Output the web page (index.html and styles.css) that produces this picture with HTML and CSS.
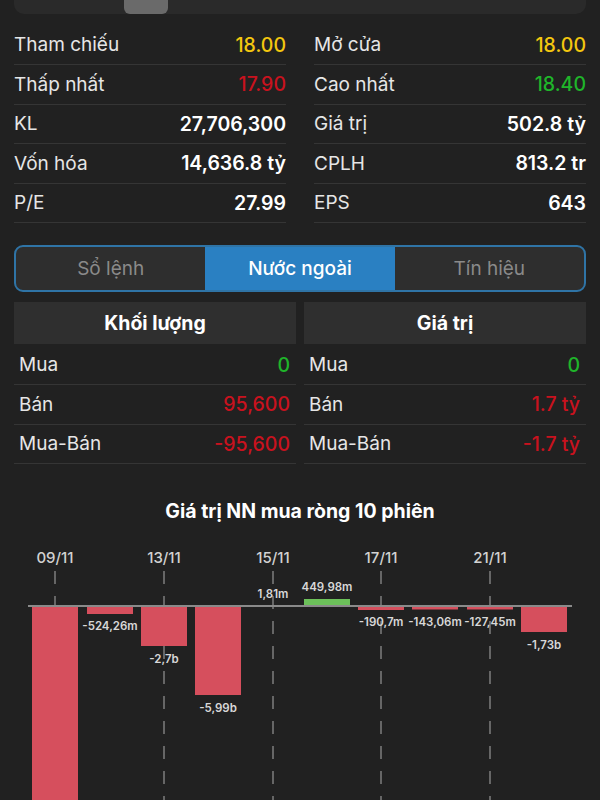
FILE: index.html
```html
<!DOCTYPE html>
<html lang="vi">
  <head>
    <meta charset="UTF-8" />
    <meta name="viewport" content="width=device-width, initial-scale=1.0" />
    <title>Nước ngoài</title>
    <link rel="stylesheet" href="styles.css">
  </head>
  <body>
    <div class="top-strip"><span class="thumb"></span></div>

    <section class="stats">
      <div class="stat"><span>Tham chiếu</span><b class="ref">18.00</b></div>
      <div class="stat"><span>Mở cửa</span><b class="ref">18.00</b></div>
      <div class="stat"><span>Thấp nhất</span><b class="down">17.90</b></div>
      <div class="stat"><span>Cao nhất</span><b class="up">18.40</b></div>
      <div class="stat"><span>KL</span><b>27,706,300</b></div>
      <div class="stat"><span>Giá trị</span><b>502.8 tỷ</b></div>
      <div class="stat"><span>Vốn hóa</span><b>14,636.8 tỷ</b></div>
      <div class="stat"><span>CPLH</span><b>813.2 tr</b></div>
      <div class="stat"><span>P/E</span><b>27.99</b></div>
      <div class="stat"><span>EPS</span><b>643</b></div>
    </section>

    <nav class="tabs">
      <div class="tab">Sổ lệnh</div>
      <div class="tab active">Nước ngoài</div>
      <div class="tab">Tín hiệu</div>
    </nav>

    <section class="foreign">
      <div class="col">
        <div class="head">Khối lượng</div>
        <div class="frow"><span>Mua</span><b class="up">0</b></div>
        <div class="frow"><span>Bán</span><b class="down">95,600</b></div>
        <div class="frow"><span>Mua-Bán</span><b class="down">-95,600</b></div>
      </div>
      <div class="col">
        <div class="head">Giá trị</div>
        <div class="frow"><span>Mua</span><b class="up">0</b></div>
        <div class="frow"><span>Bán</span><b class="down">1.7 tỷ</b></div>
        <div class="frow"><span>Mua-Bán</span><b class="down">-1.7 tỷ</b></div>
      </div>
    </section>

    <h2 class="chart-title">Giá trị NN mua ròng 10 phiên</h2>

    <svg class="chart" width="600" height="277" viewBox="0 523 600 277">
      <g class="dates">
        <text x="55" y="563">09/11</text>
        <text x="164" y="563">13/11</text>
        <text x="273" y="563">15/11</text>
        <text x="381" y="563">17/11</text>
        <text x="490" y="563">21/11</text>
      </g>
      <g class="grid">
        <line x1="55" y1="571" x2="55" y2="800" />
        <line x1="164" y1="571" x2="164" y2="800" />
        <line x1="273" y1="571" x2="273" y2="800" />
        <line x1="381" y1="571" x2="381" y2="800" />
        <line x1="490" y1="571" x2="490" y2="800" />
      </g>
      <line class="axis" x1="28" y1="606" x2="572" y2="606" />
      <g class="neg">
        <rect x="32" y="607" width="46" height="200" />
        <rect x="87" y="607" width="46" height="7" />
        <rect x="141" y="607" width="46" height="39" />
        <rect x="195" y="607" width="46" height="88" />
        <rect x="358" y="607" width="46" height="3" />
        <rect x="412" y="607" width="46" height="2.5" />
        <rect x="467" y="607" width="46" height="2.5" />
        <rect x="521" y="607" width="46" height="25" />
      </g>
      <rect class="pos" x="304" y="599" width="46" height="6" />
      <g class="vals">
        <text x="110" y="630">-524,26m</text>
        <text x="164" y="663">-2,7b</text>
        <text x="218" y="712">-5,99b</text>
        <text x="273" y="598">1,81m</text>
        <text x="327" y="591">449,98m</text>
        <text x="381" y="626">-190,7m</text>
        <text x="435" y="626">-143,06m</text>
        <text x="490" y="626">-127,45m</text>
        <text x="544" y="649">-1,73b</text>
      </g>
    </svg>
  </body>
</html>
```

FILE: styles.css
```css
html {
  overflow: hidden;
}

body {
  margin: 0;
  width: 600px;
  background-color: #212121;
  color: #fff;
  font-family: Inter, 'Noto Sans', sans-serif;
}

.top-strip {
  display: flex;
  margin: 0 14px;
  padding-left: 110px;
  height: 14px;
  background: #2a2a2a;
  border-radius: 0 0 10px 10px;
}

.thumb {
  width: 44px;
  height: 14px;
  background: #6a6a6a;
  border-radius: 0 0 6px 6px;
}

.stats {
  display: grid;
  grid-template-columns: 1fr 1fr;
  column-gap: 28px;
  padding: 0 14px;
  margin-top: 11.5px;
}

.stat,
.frow {
  box-sizing: border-box;
  display: flex;
  justify-content: space-between;
  align-items: center;
  height: 39.5px;
  border-bottom: 1px solid #353535;
  font-size: 19px;
  color: #e6e6e6;
}

.stat b,
.frow b {
  font-size: 19.5px;
  font-weight: 600;
  color: #fff;
}

.stat b.ref {
  color: #f4c70f;
  font-weight: 500;
}

b.down {
  color: #c9121e !important;
  font-weight: 500 !important;
}

b.up {
  color: #1fb52a !important;
  font-weight: 500 !important;
}

.tabs {
  display: grid;
  grid-template-columns: repeat(3, 1fr);
  margin: 21.5px 14px 0;
  height: 47px;
  box-sizing: border-box;
  border: 2px solid #2f74a6;
  border-radius: 9px;
  overflow: hidden;
  background: #2e2e2e;
}

.tab {
  display: flex;
  align-items: center;
  justify-content: center;
  font-size: 19px;
  color: #8a8a8a;
}

.tab.active {
  background: #2a80c2;
  color: #fff;
  font-weight: 500;
}

.foreign {
  display: grid;
  grid-template-columns: 1fr 1fr;
  column-gap: 8px;
  padding: 0 14px;
  margin-top: 10px;
}

.head {
  display: flex;
  align-items: center;
  justify-content: center;
  height: 42px;
  margin-bottom: 2px;
  background: #2f2f2f;
  font-size: 19.5px;
  font-weight: 700;
}

.frow {
  padding: 0 6px 0 5px;
}

.chart-title {
  margin: 35px 0 0;
  text-align: center;
  font-size: 19.5px;
  line-height: 24px;
  font-weight: 700;
}

.chart {
  display: block;
}

.dates text {
  fill: #d2d2d2;
  font-size: 15px;
  font-weight: 500;
  text-anchor: middle;
}

.grid line {
  stroke: #7d7d7d;
  stroke-width: 1.5;
  stroke-dasharray: 13 12;
}

.axis {
  stroke: #8a8a8a;
  stroke-width: 2;
}

.neg rect {
  fill: #d64f5d;
}

.pos {
  fill: #6cc05a;
}

.vals text {
  fill: #d8d8d8;
  font-size: 11.5px;
  font-weight: 600;
  text-anchor: middle;
}
```
